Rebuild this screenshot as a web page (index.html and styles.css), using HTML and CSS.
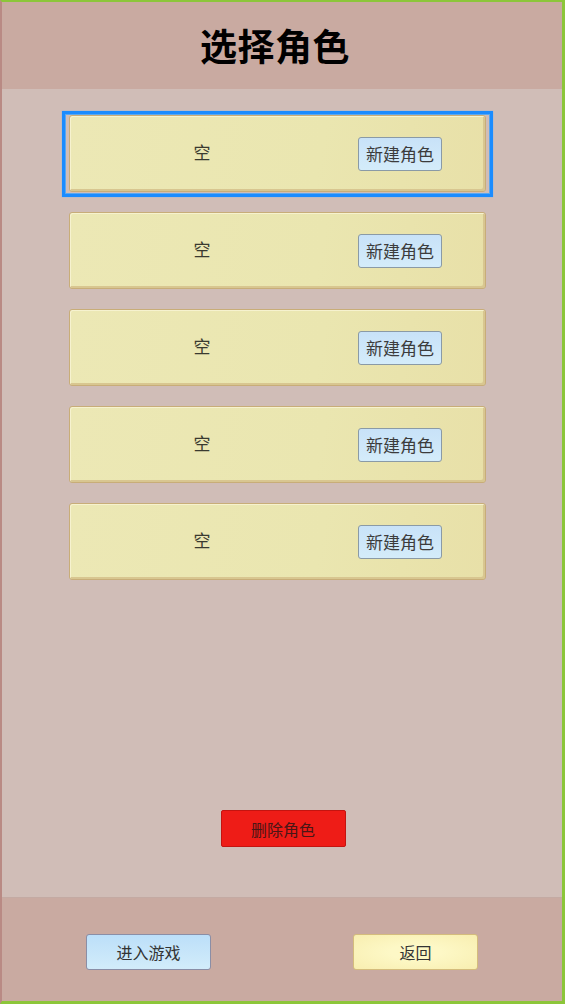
FILE: index.html
```html
<!DOCTYPE html>
<html lang="zh">
<head>
<meta charset="utf-8">
<title>选择角色</title>
<link rel="stylesheet" href="styles.css">
</head>
<body>
<div class="app">
  <header class="topbar">
    <h1 class="title">选择角色</h1>
  </header>
  <main class="content">
    <div class="slots">
      <div class="slot focused">
        <div class="card"><span class="label">空</span><button class="btn-new">新建角色</button></div>
      </div>
      <div class="slot">
        <div class="card"><span class="label">空</span><button class="btn-new">新建角色</button></div>
      </div>
      <div class="slot">
        <div class="card"><span class="label">空</span><button class="btn-new">新建角色</button></div>
      </div>
      <div class="slot">
        <div class="card"><span class="label">空</span><button class="btn-new">新建角色</button></div>
      </div>
      <div class="slot">
        <div class="card"><span class="label">空</span><button class="btn-new">新建角色</button></div>
      </div>
    </div>
    <button class="btn-delete">删除角色</button>
  </main>
  <footer class="bottombar">
    <button class="btn-enter">进入游戏</button>
    <button class="btn-back">返回</button>
  </footer>
</div>
</body>
</html>
```
FILE: styles.css
```css
* { box-sizing: border-box; }
html, body { margin: 0; padding: 0; }
body {
  font-family: "Noto Sans CJK SC", "Noto Sans", sans-serif;
  background: #cfbcb6;
}
.app {
  width: 565px;
  height: 1004px;
  display: flex;
  flex-direction: column;
  border-top: 2px solid #8cc63a;
  border-right: 3px solid #8cc63a;
  border-bottom: 3px solid #8cc63a;
  border-left: 2px solid #b98a84;
}
.topbar {
  height: 87px;
  background: #c9aaa1;
  display: flex;
  align-items: center;
  justify-content: center;
  padding-bottom: 2px;
}
.title {
  margin: 0;
  font-size: 37px;
  font-weight: 700;
  color: #000;
  letter-spacing: 0.5px;
  padding-right: 14px;
}
.content {
  flex: 1;
  background: #d0bdb7;
  display: flex;
  flex-direction: column;
  align-items: flex-start;
  padding-top: 22px;
  padding-bottom: 50px;
  border-bottom: 1px solid #c3aaa3;
}
.slots {
  display: flex;
  flex-direction: column;
  gap: 11px;
  width: 431px;
  margin-left: 60px;
}
.slot {
  height: 86px;
  padding: 4px 7px 5px 7px;
}
.slot.focused {
  border: 3px solid #1a8cff;
  padding: 1px 4px 2px 4px;
  box-shadow: inset 0 0 0 1px #5aa8f0, 0 0 1px #5ab4ff;
}
.card {
  height: 77px;
  border: 1px solid #c8ad78;
  border-radius: 3px;
  background: linear-gradient(100deg, #ece8b5 0%, #eae6b0 60%, #e8e0a8 100%);
  box-shadow: inset 1px 1px 0 #f6f2cf, inset -2px -2px 0 #d8c690;
  display: flex;
  align-items: center;
}
.label {
  width: 264px;
  text-align: center;
  font-size: 17px;
  color: #3a3a30;
  margin-top: -4px;
}
.btn-new {
  margin-left: 24px;
  width: 84px;
  height: 34px;
  padding: 0;
  font-family: inherit;
  font-size: 17px;
  color: #3c3c3c;
  background: linear-gradient(#c8e2f8, #d4ecfa);
  border: 1px solid #8a9aa6;
  border-radius: 3px;
}
.btn-delete {
  margin-top: auto;
  align-self: center;
  width: 125px;
  height: 37px;
  padding: 0;
  font-family: inherit;
  font-size: 16px;
  color: #4a1616;
  background: #ee1c17;
  border: 1px solid #c41410;
  border-radius: 2px;
  margin-left: 2px;
}
.bottombar {
  height: 103px;
  background: #c9aaa1;
  display: flex;
  align-items: flex-start;
  padding-top: 36px;
  padding-left: 84px;
  gap: 142px;
}
.btn-enter, .btn-back {
  width: 125px;
  height: 36px;
  padding: 0;
  font-family: inherit;
  font-size: 16px;
  color: #333;
  border-radius: 3px;
}
.btn-enter {
  background: linear-gradient(#bcdff9, #d2ecfa);
  border: 1px solid #8a8ea6;
}
.btn-back {
  background: radial-gradient(ellipse at center, #fdf8c6 30%, #f8eeb0 100%);
  border: 1px solid #d4bc7c;
}
```
